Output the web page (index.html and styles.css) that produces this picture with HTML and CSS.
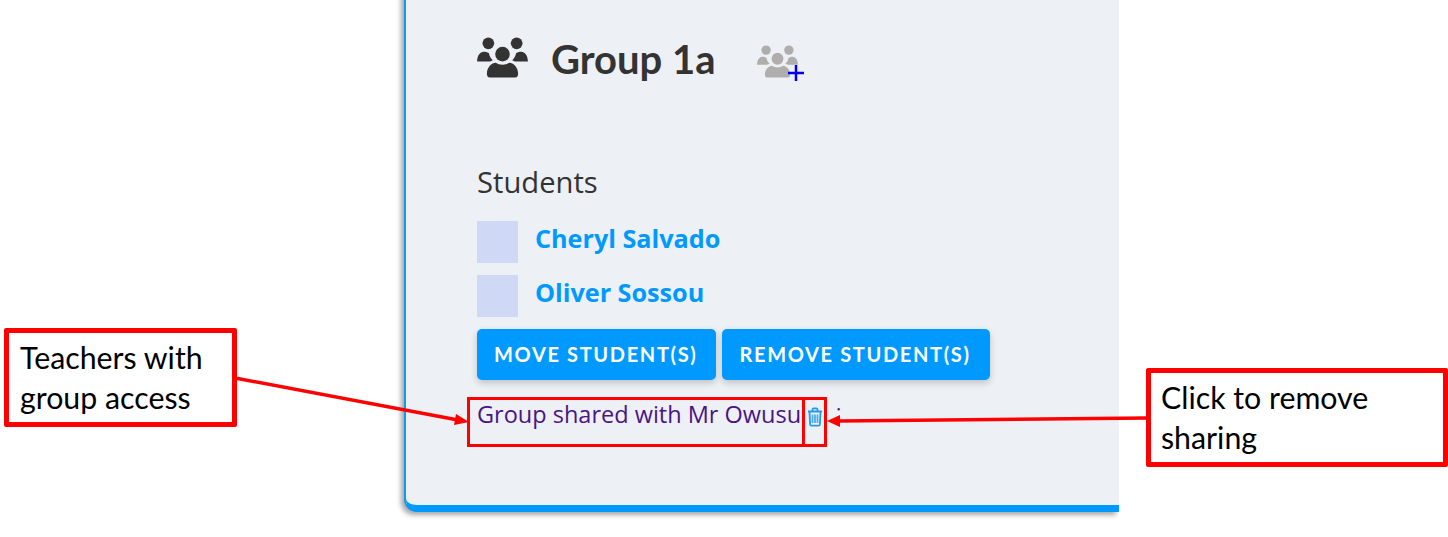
FILE: index.html
```html
<!DOCTYPE html>
<html>
  <head>
    <title>Group sharing</title>
    <meta name="viewport" content="width=device-width, initial-scale=1.0" />
    <link rel="stylesheet" href="styles.css">
  </head>
  <body>
    <div class="card">
      <div class="group-head">
        <svg class="group-icon" viewBox="0 0 52 42">
          <use href="#people" />
        </svg>
        <h1>Group 1a</h1>
        <span class="add-group">
          <svg class="add-people" viewBox="0 0 52 42">
            <use href="#people" />
          </svg>
          <svg class="add-plus" viewBox="0 0 18 18">
            <path d="M9 1v16M1 9h16" />
          </svg>
        </span>
      </div>

      <h2>Students</h2>
      <div class="student">
        <span class="avatar"></span>
        <a href="#">Cheryl Salvado</a>
      </div>
      <div class="student">
        <span class="avatar"></span>
        <a href="#">Oliver Sossou</a>
      </div>

      <div class="actions">
        <button type="button" class="first">MOVE STUDENT(S)</button>
        <button type="button">REMOVE STUDENT(S)</button>
      </div>

      <div class="shared">
        <span>Group shared with Mr Owusu</span>
        <svg class="trash" viewBox="0 0 16 20">
          <path class="trash-line" d="M1 4.500h14M5.500 4V2.600c0-.8.5-1.300 1.200-1.300h2.600c.7 0 1.200.5 1.200 1.300V4M2.500 5l.6 12.200c0 .9.6 1.500 1.500 1.500h6.800c.9 0 1.500-.6 1.500-1.500L13.500 5" />
          <path class="trash-bars" d="M5.500 7.500v8.500M8 7.500v8.500M10.500 7.500v8.500" />
        </svg>
        <span class="colon">:</span>
      </div>
    </div>

    <!-- annotations drawn over the screenshot -->
    <div class="callout callout-left">Teachers with<br />group access</div>
    <div class="callout callout-right">Click to remove<br />sharing</div>
    <div class="mark mark-text"></div>
    <div class="mark mark-icon"></div>
    <svg class="arrows" viewBox="0 0 1448 537">
      <line x1="235" y1="378" x2="458" y2="420" />
      <polygon points="469,422 456,414 454,425" />
      <line x1="1147" y1="418" x2="838" y2="421" />
      <polygon points="827,421 840,415 840,427" />
    </svg>

    <svg class="defs" width="0" height="0">
      <defs>
        <g id="people">
          <circle cx="11.500" cy="6.500" r="6" />
          <circle cx="40.500" cy="6.500" r="6" />
          <circle cx="26" cy="17.500" r="7.500" />
          <path d="M0 25c0-6 3-10 7-10 1.500 0 3 .5 5 1.500 .5 3 2 5.500 4 7.200-1 .5-2.500 1.300-3.500 1.300z" />
          <path d="M52 25c0-6-3-10-7-10-1.500 0-3 .5-5 1.500-.5 3-2 5.500-4 7.200 1 .5 2.500 1.300 3.500 1.300z" />
          <path d="M10 38c0-7 5-11.500 9-11.500 2 1.300 4.500 2 7 2s5-.7 7-2c4 0 9 4.500 9 11.500 0 2-1 3.500-3 3.500H13c-2 0-3-1.500-3-3.500z" />
        </g>
      </defs>
    </svg>
  </body>
</html>
```

FILE: styles.css
```css
body {
  margin: 0;
  width: 1448px;
  height: 537px;
  overflow: hidden;
  background-color: white;
  font-family: "Open Sans", sans-serif;
}

.card {
  box-sizing: border-box;
  width: 715px;
  height: 532px;
  margin: -20px 0 0 404px;
  padding: 56px 0 0 71px;
  background-color: #edf0f5;
  border-left: 2px solid #0d9bf5;
  border-bottom: 7px solid #0099ff;
  border-bottom-left-radius: 13px;
  box-shadow: -3px 3px 5px rgba(0, 0, 0, 0.35);
  clip-path: inset(0 0 -12px -12px);
}

.group-head {
  display: flex;
  align-items: center;
  height: 46px;
}

.group-icon {
  width: 51px;
  height: 41px;
  margin-top: -3px;
  fill: #333333;
}

h1 {
  margin: -1px 0 0 23px;
  font-family: "Lato", sans-serif;
  font-size: 40px;
  font-weight: 700;
  color: #333333;
}

.add-group {
  position: relative;
  width: 48px;
  height: 38px;
  margin: 10px 0 0 41px;
}

.add-people {
  display: block;
  width: 41px;
  height: 33px;
  fill: #b0adad;
}

.add-plus {
  position: absolute;
  left: 30px;
  top: 19px;
  width: 18px;
  height: 18px;
  fill: none;
  stroke: #0000ee;
  stroke-width: 2.500;
}

h2 {
  margin: 81px 0 0;
  font-size: 29.200px;
  line-height: 38px;
  font-weight: 400;
  color: #333333;
}

.student {
  display: flex;
  align-items: center;
  height: 42px;
  margin-top: 12px;
}

h2 + .student {
  margin-top: 20px;
}

.avatar {
  width: 41px;
  height: 42px;
  background-color: #cfd8f5;
}

.student a {
  margin: -8px 0 0 17px;
  font-size: 25.200px;
  font-weight: 700;
  color: #0099ff;
  text-decoration: none;
}

.actions {
  display: flex;
  gap: 6px;
  margin-top: 12px;
}

button {
  height: 51px;
  padding: 0 19px 2px 17px;
  font-family: "Lato", sans-serif;
  font-size: 20px;
  font-weight: 700;
  letter-spacing: 1.650px;
  color: white;
  background-color: #0099ff;
  border: none;
  border-radius: 5px;
  box-shadow: 0 3px 7px rgba(0, 0, 0, 0.2);
}

.shared {
  display: flex;
  align-items: center;
  height: 36px;
  margin-top: 16px;
  font-size: 23.500px;
  color: #4b1486;
}

.trash {
  width: 16px;
  height: 20px;
  margin: 6px 0 0 6px;
  fill: none;
  stroke: #1f9cf0;
}

.trash-line {
  stroke-width: 1.800;
}

.trash-bars {
  stroke-width: 1.800;
  stroke: #4dadf0;
}

.colon {
  margin: -6px 0 0 13px;
  font-size: 20px;
}

.callout {
  position: absolute;
  box-sizing: border-box;
  background-color: white;
  border: 5px solid #ff0000;
  border-radius: 2px;
  font-family: "Lato", sans-serif;
  font-size: 30.300px;
  line-height: 40px;
  color: black;
}

.callout-left {
  left: 4px;
  top: 328px;
  width: 233px;
  height: 99px;
  padding: 4px 0 0 11px;
}

.callout-right {
  left: 1146px;
  top: 368px;
  width: 302px;
  height: 99px;
  padding: 4px 0 0 10px;
}

.mark {
  position: absolute;
  box-sizing: border-box;
  border: 3px solid #ff0000;
}

.mark-text {
  left: 467px;
  top: 397px;
  width: 338px;
  height: 50px;
}

.mark-icon {
  left: 802px;
  top: 397px;
  width: 25px;
  height: 50px;
}

.arrows {
  position: absolute;
  left: 0;
  top: 0;
  width: 1448px;
  height: 537px;
  pointer-events: none;
}

.arrows line {
  stroke: #ff0000;
  stroke-width: 3.500;
}

.arrows polygon {
  fill: #ff0000;
}

.defs {
  position: absolute;
}
```
